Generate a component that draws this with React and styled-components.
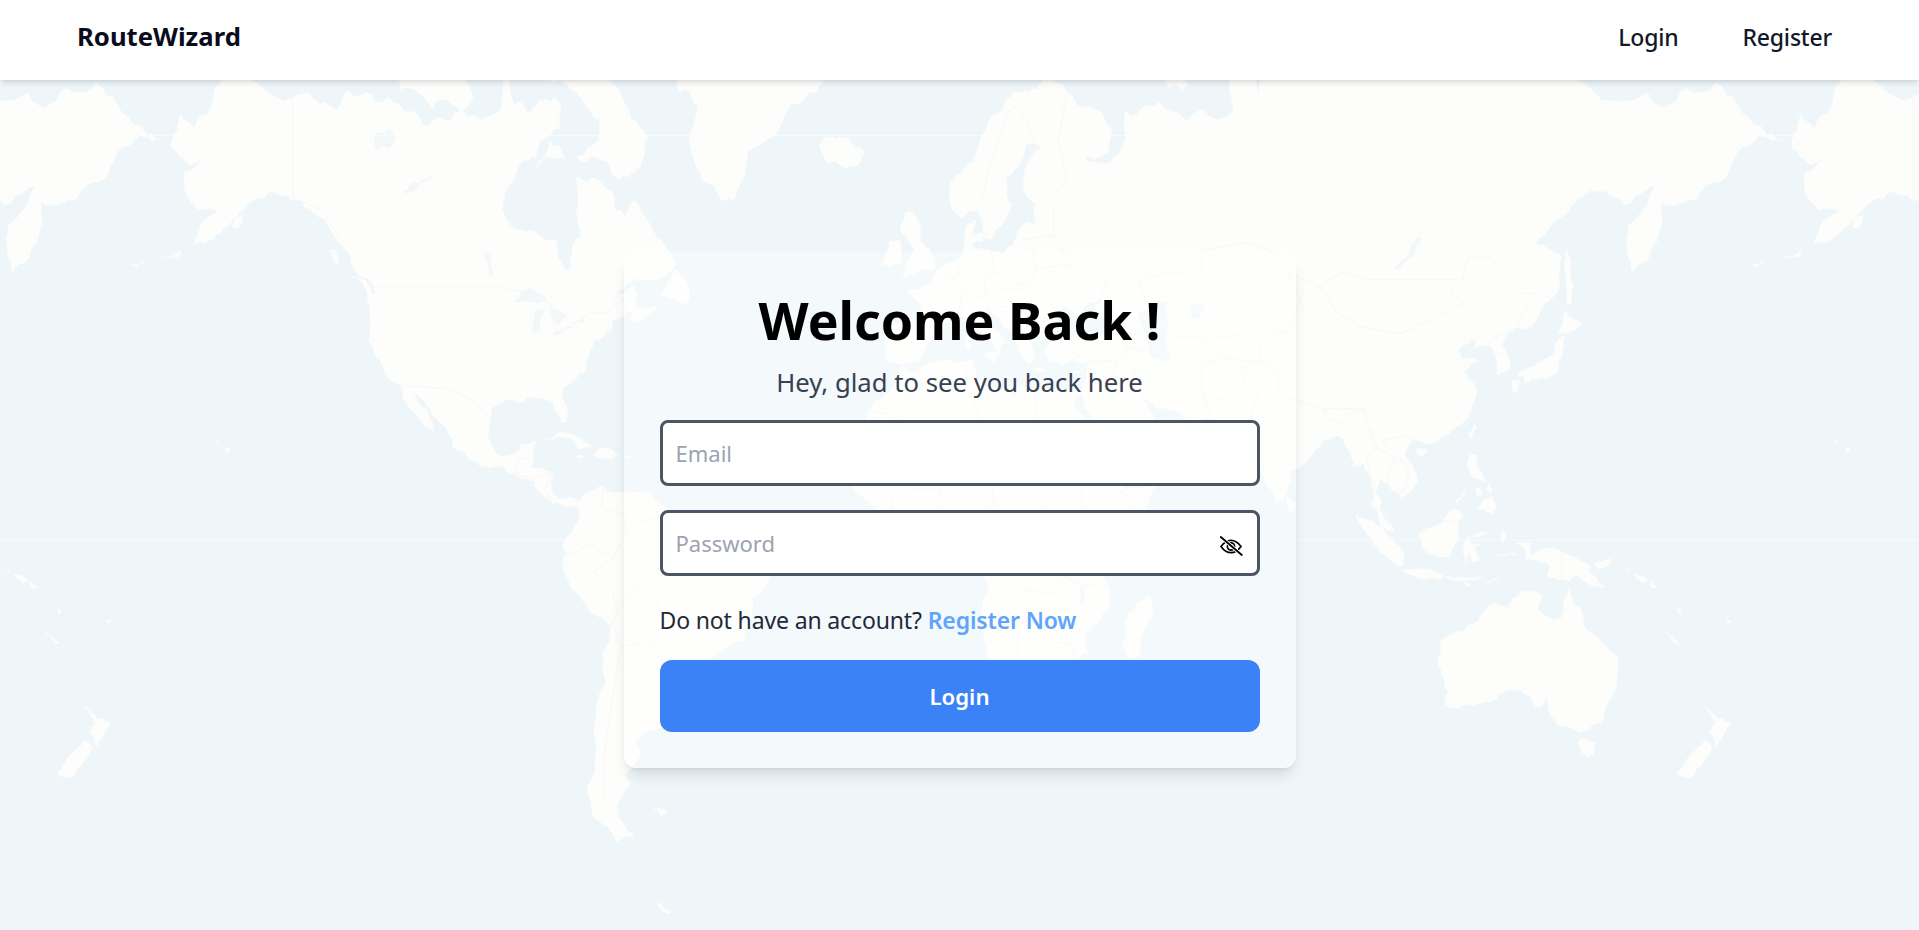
import React from "react";
import styled, { createGlobalStyle } from "styled-components";

// map is a web mercator tile background: 1620px per world, equator at y=540, lon 0 at x=927.5
const WORLD = 1620;
const project = ([lon, lat]) => {
  const r = WORLD / (2 * Math.PI);
  const y = 540 - r * Math.log(Math.tan(Math.PI / 4 + (lat * Math.PI) / 360));
  return [(927.5 + (lon * WORLD) / 360).toFixed(1), y.toFixed(1)].join(",");
};
const toPath = (pts, close = true) =>
  "M" + pts.map(project).join("L") + (close ? "Z" : "");
const parse = (s) =>
  s
    .trim()
    .split(/\s+/)
    .map((p) => p.split(",").map(Number));

// break long straight coast segments up a bit so the outline reads as a coast
const noise = (a, b) => {
  const v = Math.sin(a * 12.9898 + b * 78.233) * 43758.5453;
  return v - Math.floor(v) - 0.5;
};
const roughen = (pts, depth = 3) => {
  if (depth === 0) return pts;
  const out = [];
  pts.forEach((p, i) => {
    const q = pts[(i + 1) % pts.length];
    const dx = q[0] - p[0];
    const dy = q[1] - p[1];
    const n = noise(p[0] + q[0], p[1] + q[1]) * 0.28;
    out.push(p, [(p[0] + q[0]) / 2 - dy * n, (p[1] + q[1]) / 2 + dx * n]);
  });
  return roughen(out, depth - 1);
};

const LAND = [
  // north + central america
  "-168,65.6 -166,68.3 -163,67 -156.5,71.3 -141,69.6 -135,69 -128,70 -125,70 -115,68.5 -108,68 -100,68 -95,68.5 -94,72 -92,69 -88,68.5 -85,69.5 -81.5,69 -82,67 -86,66 -87,64.5 -91,63.5 -94,61 -94.5,59 -92.5,57 -88,56.5 -85,55.3 -82.3,55 -82,53 -80.5,51.3 -79,51.5 -79,54.5 -77,56 -78,58.5 -77.5,60 -78,62.5 -73.5,62.3 -70,61 -69.5,59 -67,58.3 -65,60 -62,57.5 -60,55.5 -57,53.5 -55.8,52 -59,50.3 -65,50.2 -67,49.3 -70,47.2 -65,49 -64.5,47.5 -65,46 -61,45.8 -60,46.2 -61,45.2 -65,43.5 -66,44 -65,45.3 -67,45 -70,43.7 -70.7,42 -74,40.6 -75,38.5 -76,37 -75.7,35.3 -78,33.9 -81,32 -81.3,30 -80,27 -80.3,25.3 -81.2,25.2 -82.7,27.7 -83,29.2 -85,29.7 -89,30.2 -89.5,29.2 -91,29.3 -94,29.6 -97,28 -97.4,25.5 -97.8,22.4 -96,19 -94.5,18.2 -92,18.6 -90.7,19.5 -90.3,21 -87,21.5 -87.5,19 -88.2,16 -86,15.9 -83.3,15 -83.7,11 -82,9 -79.5,9.5 -77.4,8.7 -78,7.5 -80,7.3 -81,7.7 -83,8.2 -85.5,10 -87.5,13 -91,14 -94.5,16.2 -97,15.8 -101.5,17.5 -105.5,20 -105.5,22 -109,26 -112.5,30 -114.7,31.7 -113,29 -110,25 -109.5,23 -112,25 -115,28 -117,32.5 -120.5,34.5 -122.5,37.5 -124.3,40.3 -124,46 -124.7,48.4 -122.5,48 -123,49 -127,51 -130,54.5 -133,57 -136,58.5 -140,60 -146,61 -150,60 -152,59 -154,58 -158,56 -163,54.8 -160,58 -157,58.7 -162,59 -165,61 -165,63 -161,64 -166,64.5",
  // greenland
  "-55,70 -51,69 -53,66 -50,62 -45,60 -43,60 -40,65 -32,68 -24,70.5 -22,72 -20,75 -20,80 -40,83 -60,82 -70,78 -58,75",
  // arctic islands
  "-80,73.5 -72,71.5 -67,69 -62,66.5 -65,63 -70,62.8 -74,64.5 -78,64.5 -73,66 -73,68 -78,70 -88,71 -88,73.5",
  "-117,70 -110,68.7 -105,69 -101,69.5 -105,73 -118,72.5",
  "-87,63.5 -80,64 -84,66",
  "-59.3,47.7 -56,51.5 -53,49 -53,46.7 -56,47",
  "-128,50.5 -125,50 -123.4,48.4 -125,48.7",
  "-133,54 -131.5,54 -131,52 -132,52.5",
  "-154,58 -152,58.3 -153,57 -154.5,56.8",
  // caribbean
  "-85,22 -80,23 -74.2,20.2 -77.7,19.9 -78,21 -82,22.4",
  "-74.4,18.5 -73,19.9 -68.4,18.6 -71,17.8",
  "-78.3,18.4 -76.3,18.2 -77,17.8",
  "-67.2,18.5 -65.7,18.4 -66,18 -67.2,18",
  // hawaii + aleutians
  "-156,20.2 -155,19.8 -155.6,19 -156,19.6",
  "-158.2,21.6 -157.7,21.4 -158,21.2",
  "-170,53 -166,54 -166,53.4",
  "-177,52 -174,52.3 -176,51.7",
  // south america
  "-77.4,8.7 -75.6,10.6 -72,12 -71.5,10.8 -68,10.5 -62,10.7 -60,8.5 -57,6 -52,4.8 -50,1.5 -50,0 -48,-1 -44,-2.5 -40,-3 -35.3,-5.5 -35,-8 -39,-13 -39.2,-18 -41,-22 -44.5,-23 -48.5,-26 -48.7,-28.5 -52,-32.5 -54,-34.5 -57,-34.5 -58.5,-34 -57,-36.5 -58,-38.3 -62,-39 -65,-41 -63.7,-42.5 -65.5,-45 -67.5,-46.3 -66,-47.5 -69,-51 -68.5,-52.5 -65.3,-54.8 -69,-55.5 -74,-52.5 -75.5,-48 -73.5,-42 -73.7,-37 -71.5,-30 -70.3,-19 -76,-14 -81.2,-6 -80,-3 -81,-1 -80,0.8 -77.5,4 -77.5,7 -78,7.5",
  "-61,-51.3 -58,-51.4 -59,-52.2",
  "-60,-62.5 -57,-63.4 -58,-63.6",
  // africa
  "-6,35.8 -2,35.2 3,36.9 10,37.3 11,33.5 15,32.3 19.5,30.3 20,32.7 25,31.6 31,31.5 34.2,31.3 32.5,29.9 34,27 37.3,21 39,16 43,12 43.3,11.6 51,12 48,5 41,-2 39,-5.5 40.5,-11 40.5,-15 35,-20 35.5,-24 32.8,-26 30.5,-31 25.7,-34 20,-34.8 18.3,-34 15,-27 11.8,-17 13.5,-11 12,-5 9,-1 9.7,3.5 6,4.3 4,6.3 -4,5.2 -8,4.4 -13,8.5 -16.7,12 -17.5,14.7 -16,19 -17,21 -13,27.7 -9.7,30",
  "49.3,-12 50.3,-16 47,-25 45,-25.5 43.5,-23 44.5,-16.5",
  // eurasia
  "-9,37 -9.3,38.8 -8.8,43.2 -1.7,43.4 -1.2,46 -4.7,48.4 -1.5,48.7 1.5,50.5 4,52 8,54 8.5,57 10.7,57.7 10,54.5 14,54 19,54.5 21,57 24,57.3 23.5,59.3 30,60 23,60 21.5,61 21.5,63 25.3,65.3 22,65.7 17.5,62.5 17.5,60.5 18.7,59.7 16.5,57 14.3,55.5 12.8,55.5 11,59 8,58 5.5,59 5,62 10,64 14,68 19,70 26,71 31,70 41,67 40,64.8 35,64.3 37,64 44,66 44,68.5 54,68.5 68,68.5 67,71 72,73 73,68 74,72 87,75 104,77.7 113,74 130,71 140,72.5 160,70 170,70 180,69 190,66 180,65 177.5,62.5 170,60 163,59.8 162,55 156.7,51 155.7,57 164,62.5 155,59.5 143,59.3 135,54.7 141,53 140.3,48.5 135,43.5 131,42.7 127.5,39.8 129.4,37 129,35.2 126.4,34.5 126.5,37.5 125,39.7 121.3,39 122,40.7 118,39 119,37.3 122.5,37 119.3,35 122,31 120,26 116,23 110.5,21 108,21.7 106,19 109,13 107,10.5 105,8.7 105,10 103,11 100.5,13.5 99.5,11 100.5,7 103.5,2 101,3 98.5,8 98.5,14 97,16.8 94.5,16 94,19 91.5,22.5 88,21.7 86.5,20 80.3,15 80,11 77.5,8 74.5,14 72.8,19 72.5,21 70,21 68,23.5 66.5,25.2 57.5,25.5 56.5,27 51,28 48.5,30 47.8,29.5 50,26.7 51,25 51.5,26 54,24 56.3,25.8 59.8,22.5 55,17 45,13 43.2,12.7 39,21 35,28 34.8,29.5 34.2,31.3 35,33 36,36.5 30,36.2 27,37 26.3,39.5 29,41 35,42 41.5,41.5 38,44.5 37,46 39,47 35,46 33.5,44.5 30.5,46 28,43 26,40.8 23,40.3 24,38 22.8,36.5 20,39.7 19.3,42 15,44.5 13.5,45.7 12.3,44.5 16,41.7 18.4,40 16.6,40 16,38 14,40.7 10.5,43 8.8,44.4 4,43.4 3,41.7 -0.3,39.5 -2,36.8 -5.5,36",
  // europe islands
  "-5.5,50 1.3,51.2 1.7,52.7 -1.5,55 -2,57.5 -3.3,58.6 -5,58.6 -6,56.5 -3,54 -5,52",
  "-10,52 -6,52.2 -6,55 -8.5,55.2",
  "-24,65.5 -18,66.3 -14,65 -18.5,63.4 -22.5,64",
  "8.2,41 9.7,41 9.6,39.2 8.5,39",
  "8.7,43 9.5,42.9 9.3,41.5",
  "12.5,38 15.6,38.2 15,36.7",
  "23.6,35.5 26.3,35.2 24.8,34.9",
  "32.4,35 34.5,35.6 33.7,34.7",
  "10.5,56 12.5,56 12,55 10,55",
  "52,71 56,71.5 58,70.6 55,70.5",
  // asia islands
  "80,9.7 81.8,7.5 80.5,6 79.8,8",
  "130.9,34 135,33.5 140,35 141,38 141.4,41.4 140,40.5 139,38 136.7,37 133,35.5",
  "130,33.5 131.7,33.5 131,31 130,31.5",
  "132.5,34 134.5,34.2 134,33.2 132.6,33",
  "140,42 141.7,45.4 145.3,43.3 143,42",
  "142,54.3 143.5,49 143,46.5 142,46.5 142,50",
  "121.5,25.2 120.2,23 120.8,22 122,24",
  "109,20 111,19.6 109.5,18.2 108.7,19",
  "120.5,18.5 122.2,18.4 122,16 124,13 121,13.8 120,16",
  "122,7 123.5,8.7 125.5,9.7 126.5,7 125.5,5.8 124,6.5",
  "122,11.6 123.2,11 122.8,9.7 122,10",
  "124.6,12.5 125.6,11.2 125,10.2 124.4,11",
  "117.2,8.4 119.5,11.3 119,10 117.6,8.3",
  "95.3,5.6 98,4.5 103.5,0 106,-3 105.8,-5.8 104,-5.5 101,-3 97.5,1.5",
  "105.3,-6.5 108.5,-6.5 111,-6.5 114.5,-7.8 114.3,-8.7 108,-7.8",
  "109,1.5 111.5,2.7 115,5 117,7 119,5 117.7,3.5 118,1 116.5,-2 116,-4 111.5,-3.3 110,-1.5",
  "119.5,-5.5 120.5,-2.8 121,-4.8 122.8,-4.5 121.5,-1.8 123,-1 121,-1 120,0.8 125,1.5 119.8,0.5 119,-3",
  "124,-10 127,-8.4 125,-9",
  "115,-8.2 119,-8.3 123,-8.3 122,-8.9 117,-9",
  "119.2,-9.6 120.8,-10.2 120,-9.4",
  "127.5,2 128.6,1.5 128,-0.8 127.5,0.5",
  "126,-3.2 128,-3.2 127,-3.7",
  "130,-3 131,-3.2 128,-3.6",
  // new guinea + oceania
  "131,-0.8 134,-0.8 134,-3.5 138,-1.7 141,-2.6 145,-4.5 147.5,-6 147,-7 150.5,-10.5 147,-9.8 144,-7.8 142.5,-9.2 138,-8.3 138.5,-6 135,-4.4 132.8,-4 133,-2.5",
  "148,-5.6 152,-4.2 151.5,-5.5 149,-6.2",
  "155,-6 156,-6.7 155.7,-7",
  "157,-7.5 160,-9 159,-9.5",
  "160.5,-9 162,-10.6 161,-10.5",
  "167,-15 167.5,-16 166.7,-15.8",
  "164,-20.2 167,-22.4 166,-22.2",
  "177.5,-17.5 178.6,-17.7 178,-18.2",
  "114,-22 113.5,-26 115.7,-32 115,-34.3 118,-35 123.5,-33.9 129,-31.7 131,-31.5 134,-32.8 135.7,-34.9 138,-33 138,-35.5 140,-38 143.5,-38.8 146.3,-39 150,-37.5 151,-34 153,-31 153.5,-25 149,-21 146,-19 145.3,-15 143.5,-14 142.5,-10.8 141.5,-13 141,-17 139,-17.5 135.5,-15 136.8,-12.2 132,-11.3 130,-13 129,-15 126,-14 122,-18 119,-20",
  "144.7,-40.7 148.3,-40.9 148,-43 146.5,-43.6 145.3,-42.5",
  "172.7,-34.5 175.5,-37 178.5,-37.7 177,-39.5 175.3,-41.6 174.8,-39.8 173.8,-39.2 175,-38",
  "172.7,-40.6 174.3,-41.7 172.8,-43.7 171,-45 170.5,-46 168.5,-46.6 166.5,-46 168.5,-44 171,-42",
]
  .map(parse)
  .map((pts) => roughen(pts));

const LAKES = [
  "47,45 53,46.8 53,41 54,37 50,37.5 49,40.5",
  "58.5,46.5 61.5,46.5 60,44 58.5,44.5",
  "-92,46.7 -88,48.7 -85,47.5 -84.5,46.5 -87,46.5",
  "-87.8,42 -87,45.5 -85,45.8 -86.3,42",
  "-84,46 -80,44.7 -82,43 -83.5,44",
  "-83.3,41.6 -79,42.8 -79,42.5 -82,41.4",
  "-79.5,43.4 -76.3,44 -76.3,43.4",
  "-123,66.5 -120,67 -118,66.3 -120,65.3 -122.5,65",
  "-116.5,61 -113,61.8 -109.5,62.8 -111.5,62 -114,61 -116,60.7",
  "-98.5,53.8 -97,53.8 -96.5,50.6 -97.3,50.6",
  "103.7,51.6 109,55.7 110,55.5 105,51.5",
  "31.8,0.3 34,0.3 34,-2.5 32,-2.5",
  "29.2,-3.5 29.8,-3.5 31,-8.5 30.2,-8",
  "34,-9.7 35,-12 34.5,-14.3 34,-13",
]
  .map(parse)
  .map((pts) => roughen(pts, 2));

const BORDERS = [
  "-141,70 -141,60.3 -135,59 -130,55",
  "-123,49 -95,49 -89,48 -84,46.5 -82.5,42 -79,43 -75,45 -71,45 -67.5,47.3 -67,45",
  "-117,32.5 -106.5,31.8 -101,29.7 -97.2,25.9",
  "-92,14.6 -91,17.8 -89,17.8 -88.2,18.4",
  "-92,14.6 -88,13.5 -83.5,15 -85,11 -83,8.5",
  "-72,12 -72.5,7 -67.5,6 -67,1.5 -70,-4.2 -74,-7 -70,-11 -69,-16 -70.3,-18.5",
  "-80,-3.4 -75,-1 -70,-4.2",
  "-60,8.5 -60,5 -64,4 -67,1.5",
  "-70,-18.5 -68,-23 -70,-33 -72,-44 -72,-50 -68.5,-52.5",
  "-69,-16 -65,-10 -60,-13.5 -58,-19.8 -62,-22 -58,-27 -54,-26 -57.5,-30 -53,-33.5",
  "-68,-23 -62,-22",
  // europe and russia
  "-1.7,43.4 3,42.5",
  "-7,42 -7,37.2",
  "2.5,51 6,50 8,49 7.5,47.6 7,44",
  "7.5,47.6 13,47.5 17,48.5 22,48.5 24,48 29,45.5",
  "7,54 7,51 6,50",
  "14,54 15,51 12.5,50.3 13,47.5",
  "15,51 19,49.5 23,49 24,51.5 23.5,54 21,55.3",
  "24,51.5 32,52 40,49.5 38,47",
  "21,55.3 28,56 28,59.5",
  "28,56 32,52",
  "15,46 19,46 22.5,44.5 20,42 23,41",
  "22.5,44.5 28,43.8",
  "26,41.5 28,42",
  "31,70 29,66 31,62.5 28,60.5",
  "20,69 24,66 25,65.3",
  "12,60 14,64 18,68.5 20,69",
  "42,41.5 48,41.8",
  "26,41 36,36.8 42,37 44.5,39.5 44,37 46,35 48,30",
  "36,36.8 42,37 41,34 36,32.3",
  "36,32 39,32 47,29",
  "44,37 46,35",
  "48.5,38.5 44.5,39.5",
  "61,36.5 61,31 63,26",
  "61,36.5 66,37.3 71,37 74,37",
  "61,31 66,29.5 70,33 71,36 74,37 78,35 78,31 81,30 88,28 92,28 97,28",
  "63,26 68,24",
  "70,21.5 74,32",
  "48,42 49,46 47,50 54,51 61,50.5 61,54 71,55 76,54 80,51 87,49",
  "87,49 92,51 98,50 107,50 114,50 119,50 120,53 125,53 131,48 135,48 131,43",
  "87,49 91,45 96,42.8 105,41.6 112,44 119,46.5 116,48 119,50",
  "80,51 83,47 80,42 74,40",
  "54,41 61,41 66,37.3",
  "61,41 67,41 71,42 80,42",
  "74,40 74,37",
  "124,40 128,41.8 130.6,42.3",
  "126,38 128.4,38.5",
  "88,28 89,26 92,25 94,27 97,28 98,24 101,21.5 106,22.5 108,21.7",
  "98,24 100,20 97.5,18 98.5,14 99.5,11",
  "101,21.5 105,18 107,15 106,11 103,11",
  "100,20 104,18 102,14 103,11",
  "100.5,6.5 102,6",
  "109.5,1.5 115,4.3 117,4.2",
  "141,-2.6 141,-9.2",
  "125,-9.2 125,-9.8",
  // africa
  "-9,28 -1,32 -2,35",
  "-13,27.7 -9,27 -5,25 3,19 12,23.5 10,30 8.5,33 8.5,37",
  "-17,21 -13,21 -12,26",
  "-5,25 -6,15 -12,15 -16,16.5",
  "-16.7,12 -11,12 -8,10 -8,4.4",
  "-6,15 -3,11 3,11 3,6.3",
  "3,11 3,14 12,13.5 14,13 15,8 9,4.3",
  "12,23.5 15,23 24,19.5 24,31.5",
  "15,23 14,13",
  "24,22 37,22",
  "24,19.5 23,11 27,5 31,3.5 35,5 42,4 46,8 43,11",
  "36,14 38,18",
  "36,14 34,10 35,5",
  "15,8 18,5 27,5",
  "12,-5 14,-5 17,-6 22,-11 28,-12 30,-8 29,-3 31,3.5",
  "34,-1 41,-2",
  "30,-8 34,-9.7 40.5,-10.5",
  "12,-17 24,-18 28,-22 32,-22.5 33,-26",
  "20,-18 20,-28 17,-29",
  "22,-11 22,-18",
  "24,-18 30,-15 35,-16",
].map(parse);

const copies = [-WORLD, 0, WORLD];

const WorldMap = () => (
  <MapSvg viewBox="0 0 1919 930" aria-hidden="true">
    <rect width="1919" height="930" fill="#eef6fa" />
    {copies.map((dx) => (
      <g key={dx} transform={`translate(${dx} 0)`}>
        {LAND.map((pts, i) => (
          <path key={i} d={toPath(pts)} fill="#fdfdfb" stroke="#fdfdfb" strokeWidth="0.6" strokeLinejoin="round" />
        ))}
        {LAKES.map((pts, i) => (
          <path key={i} d={toPath(pts)} fill="#f2f8fa" />
        ))}
        {BORDERS.map((pts, i) => (
          <path key={i} d={toPath(pts, false)} fill="none" stroke="#f9f7f6" strokeWidth="1" />
        ))}
      </g>
    ))}
    {/* tile seams */}
    <line x1="0" x2="1919" y1="135.5" y2="135.5" stroke="#fff" strokeOpacity="0.5" />
    <line x1="0" x2="1919" y1="540.5" y2="540.5" stroke="#fff" strokeOpacity="0.5" />
  </MapSvg>
);

const EyeOffIcon = () => (
  <svg width="24" height="20" viewBox="0 0 24 20" fill="none" stroke="#000" strokeLinecap="round">
    <path d="M2 10.5C5 6.3 8.5 4.3 12 4.3s7 2 10 6.2c-3 4.2-6.5 6.2-10 6.2s-7-2-10-6.2Z" strokeWidth="1.7" />
    <circle cx="12" cy="10.5" r="3.6" strokeWidth="1.7" />
    <path d="M1.8 1 22.8 19" stroke="#fff" strokeWidth="3.6" />
    <path d="M1.8 1 22.8 19" strokeWidth="1.8" />
  </svg>
);

const App = () => {
  return (
    <Page>
      <GlobalStyle />
      <WorldMap />
      <Navbar>
        <Logo>RouteWizard</Logo>
        <NavLinks>
          <NavLink href="#">Login</NavLink>
          <NavLink href="#">Register</NavLink>
        </NavLinks>
      </Navbar>

      <Main>
        <Card>
          <Title>Welcome Back !</Title>
          <Subtitle>Hey, glad to see you back here</Subtitle>
          <Form onSubmit={(e) => e.preventDefault()}>
            <Field>
              <Input type="email" placeholder="Email" />
            </Field>
            <Field>
              <Input type="password" placeholder="Password" />
              <EyeButton type="button" aria-label="Show password">
                <EyeOffIcon />
              </EyeButton>
            </Field>
            <RegisterText>
              Do not have an account? <RegisterLink href="#">Register Now</RegisterLink>
            </RegisterText>
            <SubmitButton type="submit">Login</SubmitButton>
          </Form>
        </Card>
      </Main>
    </Page>
  );
};

export default App;

const GlobalStyle = createGlobalStyle`
  * {
    box-sizing: border-box;
  }

  html,
  body {
    margin: 0;
    height: 100%;
    overflow: hidden;
    background-color: #eef6fa;
    font-family: "Noto Sans", "Open Sans", sans-serif;
  }
`;

const Page = styled.div`
  position: relative;
  display: flex;
  flex-direction: column;
  height: 100vh;
  overflow: hidden;
`;

const MapSvg = styled.svg`
  position: absolute;
  inset: 0;
  width: 100%;
  height: 100%;
  filter: blur(0.5px);
`;

const Navbar = styled.header`
  position: relative;
  display: flex;
  justify-content: space-between;
  align-items: center;
  height: 80px;
  padding: 0 87px 7px 77px;
  background-color: #fff;
  box-shadow: 0 4px 6px -1px rgba(0, 0, 0, 0.1), 0 2px 4px -2px rgba(0, 0, 0, 0.1);
`;

const Logo = styled.div`
  font-size: 25.7px;
  font-weight: 700;
  color: #0b0b1e;
`;

const NavLinks = styled.nav`
  display: flex;
  gap: 64px;
`;

const NavLink = styled.a`
  font-size: 23px;
  font-weight: 500;
  letter-spacing: -0.2px;
  color: #111827;
  text-decoration: none;
`;

const Main = styled.main`
  position: relative;
  flex: 1;
  display: flex;
  justify-content: center;
  align-items: flex-start;
  padding-top: 172px;
`;

const Card = styled.section`
  display: flex;
  flex-direction: column;
  width: 672px;
  padding: 36px;
  border-radius: 12px;
  background-color: rgba(255, 255, 255, 0.35);
  box-shadow: 0 10px 15px -3px rgba(0, 0, 0, 0.1), 0 4px 6px -4px rgba(0, 0, 0, 0.1);
`;

const Title = styled.h1`
  margin: 0;
  font-size: 51.8px;
  line-height: 64px;
  font-weight: 700;
  text-align: center;
  color: #000;
`;

const Subtitle = styled.p`
  margin: 13px 0 19px;
  font-size: 25.7px;
  line-height: 36px;
  text-align: center;
  color: #374151;
`;

const Form = styled.form`
  display: flex;
  flex-direction: column;
`;

const Field = styled.div`
  position: relative;
  margin-bottom: 24px;
`;

const Input = styled.input`
  display: block;
  width: 100%;
  height: 66px;
  padding: 0 56px 0 13px;
  border: 3px solid #4b5563;
  border-radius: 8px;
  background-color: #fff;
  font-family: inherit;
  font-size: 22px;
  outline: none;

  &::placeholder {
    color: #9ca3af;
  }
`;

const EyeButton = styled.button`
  position: absolute;
  top: 50%;
  right: 17px;
  display: flex;
  margin-top: 3px;
  padding: 0;
  border: none;
  background: none;
  transform: translateY(-50%);
  cursor: pointer;
`;

const RegisterText = styled.p`
  margin: 4px 0 24px;
  font-size: 23px;
  letter-spacing: -0.14px;
  line-height: 32px;
  color: #1f2937;
`;

const RegisterLink = styled.a`
  font-weight: 600;
  color: #60a5fa;
  text-decoration: none;
`;

const SubmitButton = styled.button`
  height: 72px;
  border: none;
  border-radius: 12px;
  background-color: #3b82f6;
  font-family: inherit;
  font-size: 22.2px;
  font-weight: 600;
  color: #fff;
  cursor: pointer;
`;
